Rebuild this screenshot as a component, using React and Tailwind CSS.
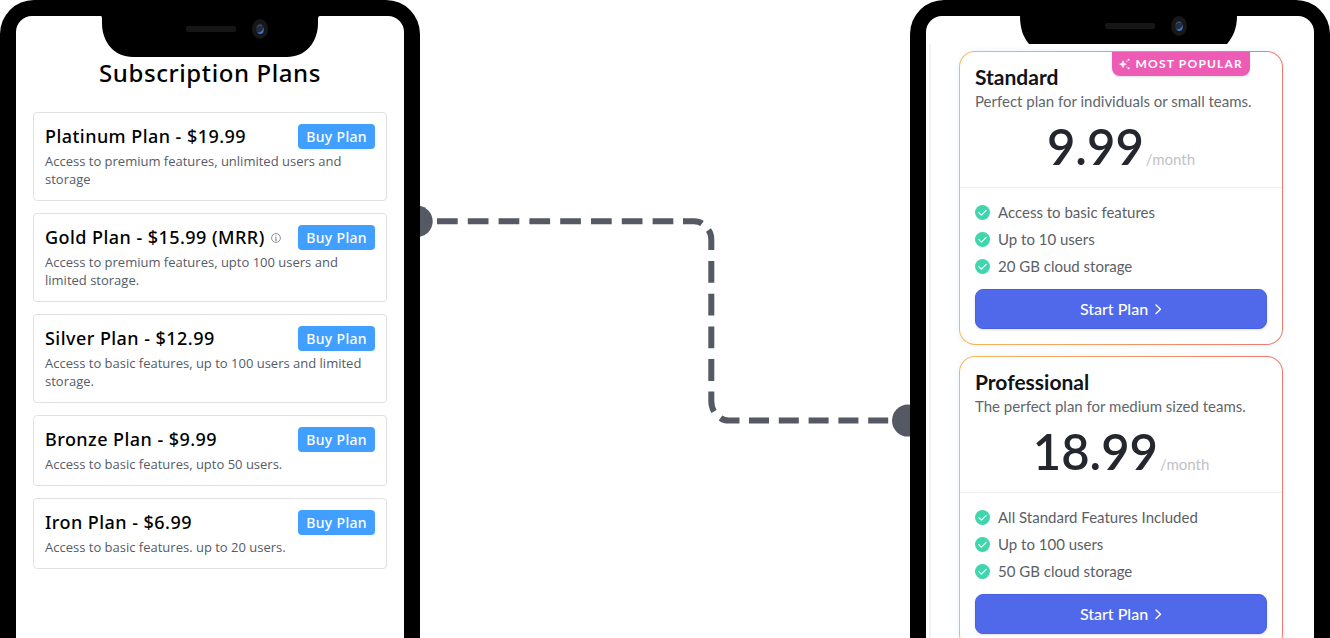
import React from "react";

const subscriptionPlans = [
  { title: "Platinum Plan - $19.99", text: "Access to premium features, unlimited users and storage" },
  { title: "Gold Plan - $15.99 (MRR)", text: "Access to premium features, upto 100 users and limited storage.", info: true },
  { title: "Silver Plan - $12.99", text: "Access to basic features, up to 100 users and limited storage." },
  { title: "Bronze Plan - $9.99", text: "Access to basic features, upto 50 users." },
  { title: "Iron Plan - $6.99", text: "Access to basic features. up to 20 users." },
];

const tiers = [
  {
    name: "Standard",
    text: "Perfect plan for individuals or small teams.",
    price: "9.99",
    features: ["Access to basic features", "Up to 10 users", "20 GB cloud storage"],
    popular: true,
  },
  {
    name: "Professional",
    text: "The perfect plan for medium sized teams.",
    price: "18.99",
    features: ["All Standard Features Included", "Up to 100 users", "50 GB cloud storage"],
  },
];

function Camera({ x, y }) {
  return (
    <g>
      <rect x={x - 74} y={y - 3} width="50" height="6" rx="2" fill="#161616" />
      <ellipse cx={x} cy={y} rx="8" ry="10" fill="#171718" />
      <ellipse cx={x} cy={y} rx="4" ry="5" fill="#232d40" />
      <path d={`M${x - 2.5} ${y + 3.5}q5 0 6-5 1 6-3 6.500-2 0-3-1.500Z`} fill="#4474c4" />
      <path d={`M${x - 3} ${y - 2}q2-3 5-1.500`} stroke="#3d5480" fill="none" />
    </g>
  );
}

function RoundNotch() {
  return (
    <svg className="block" width="219" height="57" viewBox="0 0 219 57" aria-hidden="true">
      <path d="M0 16V0h219v16q-2 0-2 3v4c0 20-13 34-31 34H32C14 57 1 43 1 23v-4q0-3-1-3Z" />
      <Camera x={159} y={29} />
    </svg>
  );
}

function CutNotch() {
  return (
    <svg className="block" width="219" height="44" viewBox="0 0 219 44" aria-hidden="true">
      <path d="M1 0h217v16c0 12-4 21-10 28H10C4 37 1 28 1 16Z" />
      <Camera x={160} y={26} />
    </svg>
  );
}

function Connector() {
  return (
    <svg className="block w-full" height="638" viewBox="0 0 490 638" fill="none" stroke="#555964" strokeWidth="6" aria-hidden="true">
      <circle cx="-3" cy="221.300" r="15.700" fill="#555964" stroke="none" />
      <path d="M17 221.300H260" strokeDasharray="20.700 10.100" />
      <path d="M263 221.300H274Q279 221.300 282 223.500" />
      <path d="M288.500 230Q291.300 234 291.300 239V250" />
      <path d="M291.300 261V384" strokeDasharray="21.800 10.900" />
      <path d="M291.300 391.500V401Q291.300 407 294 411.500" />
      <path d="M300.500 418Q304 420.600 309 420.600H319.500" />
      <path d="M329 420.600H469" strokeDasharray="20 9.800" />
      <circle cx="488" cy="420.600" r="16" fill="#555964" stroke="none" />
    </svg>
  );
}

function InfoIcon() {
  return (
    <svg width="10" height="10" viewBox="0 0 10 10" fill="none" stroke="#6b7280" aria-hidden="true">
      <circle cx="5" cy="5" r="4.400" strokeWidth="0.800" />
      <path d="M4.200 4.500H5V7.200M4.100 7.200h1.900M5 2.500v0.900" strokeWidth="0.800" />
    </svg>
  );
}

function CheckIcon() {
  return (
    <svg className="shrink-0" width="15" height="15" viewBox="0 0 15 15" fill="none" aria-hidden="true">
      <circle cx="7.500" cy="7.500" r="7.500" fill="#3fd6ae" />
      <path d="m3.800 7.600 2.600 2.500 4.800-4.800" stroke="#fff" strokeWidth="1.100" strokeLinecap="round" strokeLinejoin="round" />
    </svg>
  );
}

function SparkIcon() {
  return (
    <svg width="12" height="12" viewBox="0 0 12 12" fill="#fff" aria-hidden="true">
      <path d="M4 2.600Q4.400 5.800 7.400 6.200 4.400 6.600 4 9.800 3.600 6.600 .5 6.200 3.600 5.800 4 2.600Z" stroke="#fff" strokeWidth="0.600" />
      <circle cx="9.600" cy="1.700" r="1" />
      <circle cx="7.900" cy="3.200" r="0.600" />
      <circle cx="9.600" cy="10.300" r="1" />
      <circle cx="7.900" cy="9" r="0.600" />
    </svg>
  );
}

function ChevronIcon() {
  return (
    <svg width="7" height="12" viewBox="0 0 7 12" fill="none" stroke="#fff" strokeWidth="1.400" strokeLinecap="round" strokeLinejoin="round" aria-hidden="true">
      <path d="M1 2 5.500 6.200 1 10.500" />
    </svg>
  );
}

function PlanCard({ plan }) {
  return (
    <li className="rounded-sm border border-[#dfe1e5] px-[11px] pt-[11px] pb-3">
      <div className="flex items-center justify-between">
        <h2 className="flex items-center gap-[6px] text-[18px] leading-[25px] font-medium tracking-wide text-black">
          {plan.title}
          {plan.info && <InfoIcon />}
        </h2>
        <button type="button" className="h-[25px] rounded-sm bg-[#409fff] px-2 text-[14px] leading-6 font-medium tracking-wide text-white">
          Buy Plan
        </button>
      </div>
      <p className="mt-[3px] font-['Open_Sans',sans-serif] text-[13px] leading-[18px] text-[#555b68]">{plan.text}</p>
    </li>
  );
}

function TierCard({ tier }) {
  return (
    <article className="rounded-2xl bg-linear-to-r from-[#f5b759] to-[#f0796f] p-px shadow-[0_0_6px_rgba(120,190,210,0.18)]">
      <div className="relative rounded-[15px] bg-white pb-[15px]">
        {tier.popular && (
          <p className="absolute top-0 right-8 flex h-6 items-center gap-1 rounded-b-lg bg-[#ee5bb5] px-[7px] pb-px text-[12px] font-bold tracking-widest text-white shadow-sm">
            <SparkIcon />
            MOST POPULAR
          </p>
        )}
        <header className="border-b border-[#f0f1f4] px-[15px] pt-[13px] pb-2">
          <h2 className="text-[21px] leading-6 font-bold text-[#121317]">{tier.name}</h2>
          <p className="text-[15px] leading-6 text-[#62656d]">{tier.text}</p>
          <p className="flex items-baseline justify-center gap-[2px] text-[#25272e]">
            <span className="text-[49px] leading-[66px] font-semibold">{tier.price}</span>
            <span className="text-[15px] text-[#bfc1c9]">/month</span>
          </p>
        </header>
        <ul className="flex flex-col px-[15px] pt-[11px]">
          {tier.features.map((f) => (
            <li key={f} className="flex h-[27px] items-center gap-2 text-[15px] text-[#5b5e66]">
              <CheckIcon />
              {f}
            </li>
          ))}
        </ul>
        <div className="px-[15px] pt-[9px]">
          <button type="button" className="flex h-10 w-full items-center justify-center gap-[7px] rounded-lg border border-[#4961e0] bg-[#5069eb] text-[16px] font-medium text-white shadow-sm">
            Start Plan
            <ChevronIcon />
          </button>
        </div>
      </div>
    </article>
  );
}

export default function App() {
  return (
    <main className="flex h-screen overflow-hidden bg-white">
      <section className="relative min-h-0 w-[420px] shrink-0 rounded-t-[34px] bg-black px-4 pt-4 font-['Noto_Sans',sans-serif]">
        <div className="absolute inset-x-0 top-0 flex justify-center">
          <RoundNotch />
        </div>
        <div className="min-h-full rounded-t-2xl bg-white px-[17px] pt-10">
          <h1 className="text-center text-[24px] leading-[34px] font-medium tracking-wide text-black">Subscription Plans</h1>
          <ul className="mt-[22px] flex flex-col gap-3">
            {subscriptionPlans.map((p) => (
              <PlanCard key={p.title} plan={p} />
            ))}
          </ul>
        </div>
      </section>
      <div className="min-w-0 flex-1">
        <Connector />
      </div>
      <section className="relative min-h-0 w-[420px] shrink-0 rounded-t-[34px] bg-black px-4 pt-4 font-['Lato',sans-serif]">
        <div className="absolute inset-x-0 top-0 flex justify-center pl-[17px]">
          <CutNotch />
        </div>
        <div className="min-h-full rounded-t-2xl bg-white pt-7">
          <div className="ml-[3px] border-l-2 border-[#eff3f7] pt-[7px] pr-[31px] pl-7">
            <div className="flex flex-col gap-[11px]">
              {tiers.map((t) => (
                <TierCard key={t.name} tier={t} />
              ))}
            </div>
          </div>
        </div>
      </section>
    </main>
  );
}
